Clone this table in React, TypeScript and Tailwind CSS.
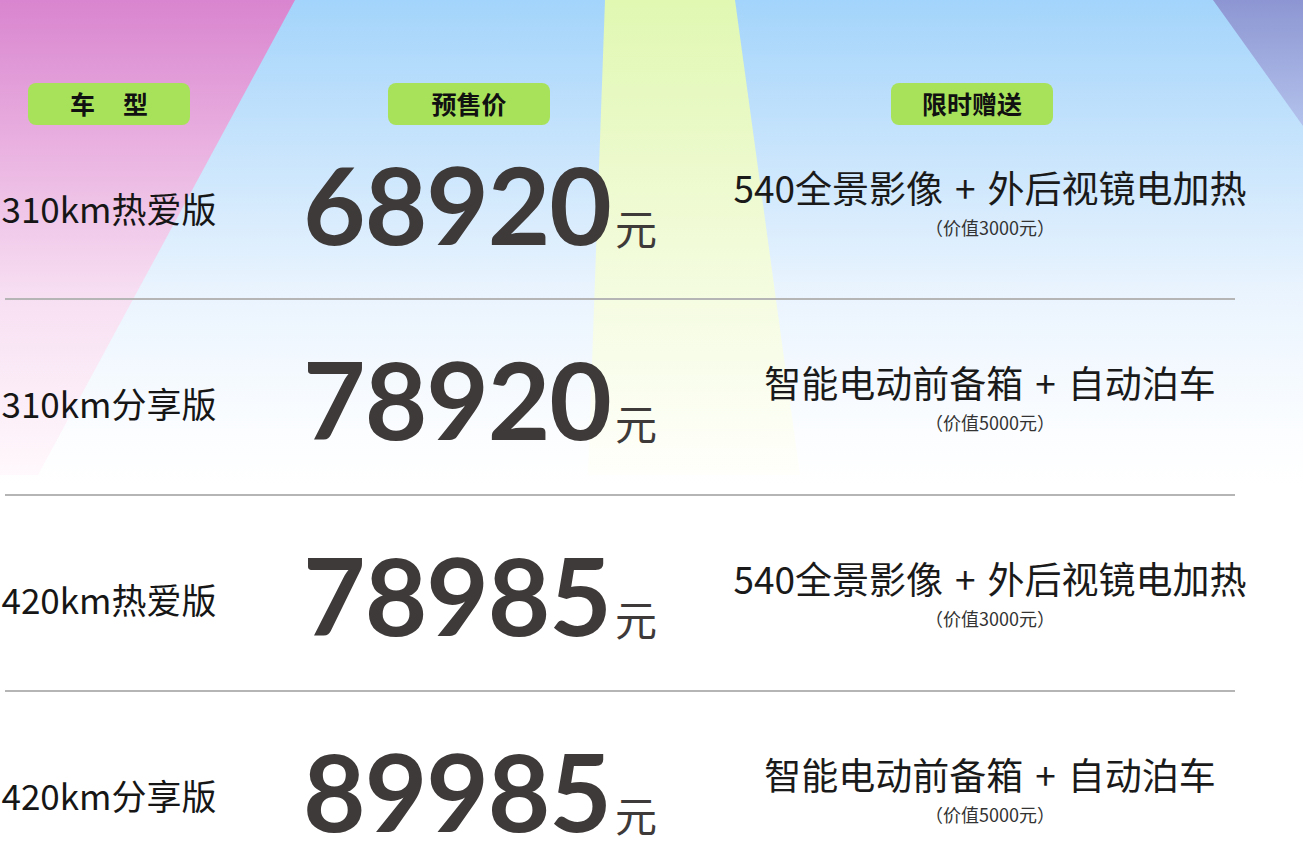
import React from "react";

type Row = {
    model: string;
    price: string;
    gift: [string, string];
    value: string;
};

const rows: Row[] = [
    { model: "310km热爱版", price: "68920", gift: ["540全景影像", "外后视镜电加热"], value: "（价值3000元）" },
    { model: "310km分享版", price: "78920", gift: ["智能电动前备箱", "自动泊车"], value: "（价值5000元）" },
    { model: "420km热爱版", price: "78985", gift: ["540全景影像", "外后视镜电加热"], value: "（价值3000元）" },
    { model: "420km分享版", price: "89985", gift: ["智能电动前备箱", "自动泊车"], value: "（价值5000元）" },
];

// light beams behind the table
function Beams() {
    return (
        <svg className="absolute inset-0 w-full h-full" viewBox="0 0 1303 864" preserveAspectRatio="none">
            <defs>
                <linearGradient id="sky" x1="0" y1="0" x2="0" y2="1">
                    <stop offset="0" stopColor="#a3d4fb" />
                    <stop offset="0.15" stopColor="#c3e2fc" />
                    <stop offset="0.34" stopColor="#eaf4fe" />
                    <stop offset="0.5" stopColor="#fbfdff" />
                    <stop offset="0.56" stopColor="#ffffff" />
                </linearGradient>
                <linearGradient id="pink" x1="0" y1="0" x2="0" y2="1">
                    <stop offset="0" stopColor="#d985cf" />
                    <stop offset="0.3" stopColor="#e9b0e0" />
                    <stop offset="0.62" stopColor="#f7dff2" />
                    <stop offset="1" stopColor="#fff8fc" />
                </linearGradient>
                <linearGradient id="lime" x1="0" y1="0" x2="0" y2="1">
                    <stop offset="0" stopColor="#e0f8b2" />
                    <stop offset="0.4" stopColor="#eefad0" />
                    <stop offset="0.75" stopColor="#f8fdea" />
                    <stop offset="1" stopColor="#fffffb" />
                </linearGradient>
                <linearGradient id="violet" x1="0" y1="0" x2="0" y2="1">
                    <stop offset="0" stopColor="#8d96d2" />
                    <stop offset="1" stopColor="#b3c2ec" />
                </linearGradient>
            </defs>
            <rect x="0" y="0" width="1303" height="864" fill="url(#sky)" />
            <polygon points="0,0 295,0 38,475 0,475" fill="url(#pink)" />
            <polygon points="605,0 735,0 800,475 588,475" fill="url(#lime)" />
            <polygon points="1213,0 1303,0 1303,126" fill="url(#violet)" />
        </svg>
    );
}

function Pill({ children }: { children: React.ReactNode }) {
    return (
        <div className="w-[162px] h-[42px] rounded-lg bg-[#a8e25b] flex items-center justify-center gap-[28px] text-[25px] font-bold text-[#111]">
            {children}
        </div>
    );
}

export default function App() {
    return (
        <div className="relative w-full h-[864px] overflow-hidden bg-white font-['Noto_Sans_CJK_SC',sans-serif]">
            <Beams />

            <div className="relative">
                {/* header */}
                <div className="flex pt-[83px]">
                    <div className="w-[218px] flex justify-center">
                        <Pill><span>车</span><span>型</span></Pill>
                    </div>
                    <div className="w-[502px] flex justify-center">
                        <Pill>预售价</Pill>
                    </div>
                    <div className="w-[504px] flex justify-center">
                        <Pill>限时赠送</Pill>
                    </div>
                </div>

                {rows.map((r, i) => (
                    <div key={r.model}>
                        <div className={`flex items-center ${i === 0 ? "h-[173px] pb-[6px]" : "h-[194px] pt-[12px]"}`}>
                            <div className="w-[218px] flex justify-center text-[35px] text-[#161616] whitespace-nowrap">
                                {r.model}
                            </div>
                            <div className="w-[502px] flex justify-center pl-[22px] mb-[11px]">
                                <div className="flex items-baseline text-[#3e3a39] whitespace-nowrap">
                                    <span className="font-[Lato,sans-serif] font-bold text-[108px] leading-none tracking-[-0.01em]">
                                        {r.price}
                                    </span>
                                    <span className="text-[42px] leading-none ml-[4px]">元</span>
                                </div>
                            </div>
                            <div className="w-[540px] flex flex-col items-center text-[#1a1a1a] whitespace-nowrap mb-[12px]">
                                <div className="text-[37px] leading-none">
                                    {r.gift[0]}<span className="px-[12px]">+</span>{r.gift[1]}
                                </div>
                                <div className="text-[18px] leading-none text-[#333] mt-[12px]">{r.value}</div>
                            </div>
                        </div>
                        {i < rows.length - 1 && (
                            <div className="ml-[5px] w-[1230px] h-[2px] bg-[#b5b5b5]" />
                        )}
                    </div>
                ))}
            </div>
        </div>
    );
}
